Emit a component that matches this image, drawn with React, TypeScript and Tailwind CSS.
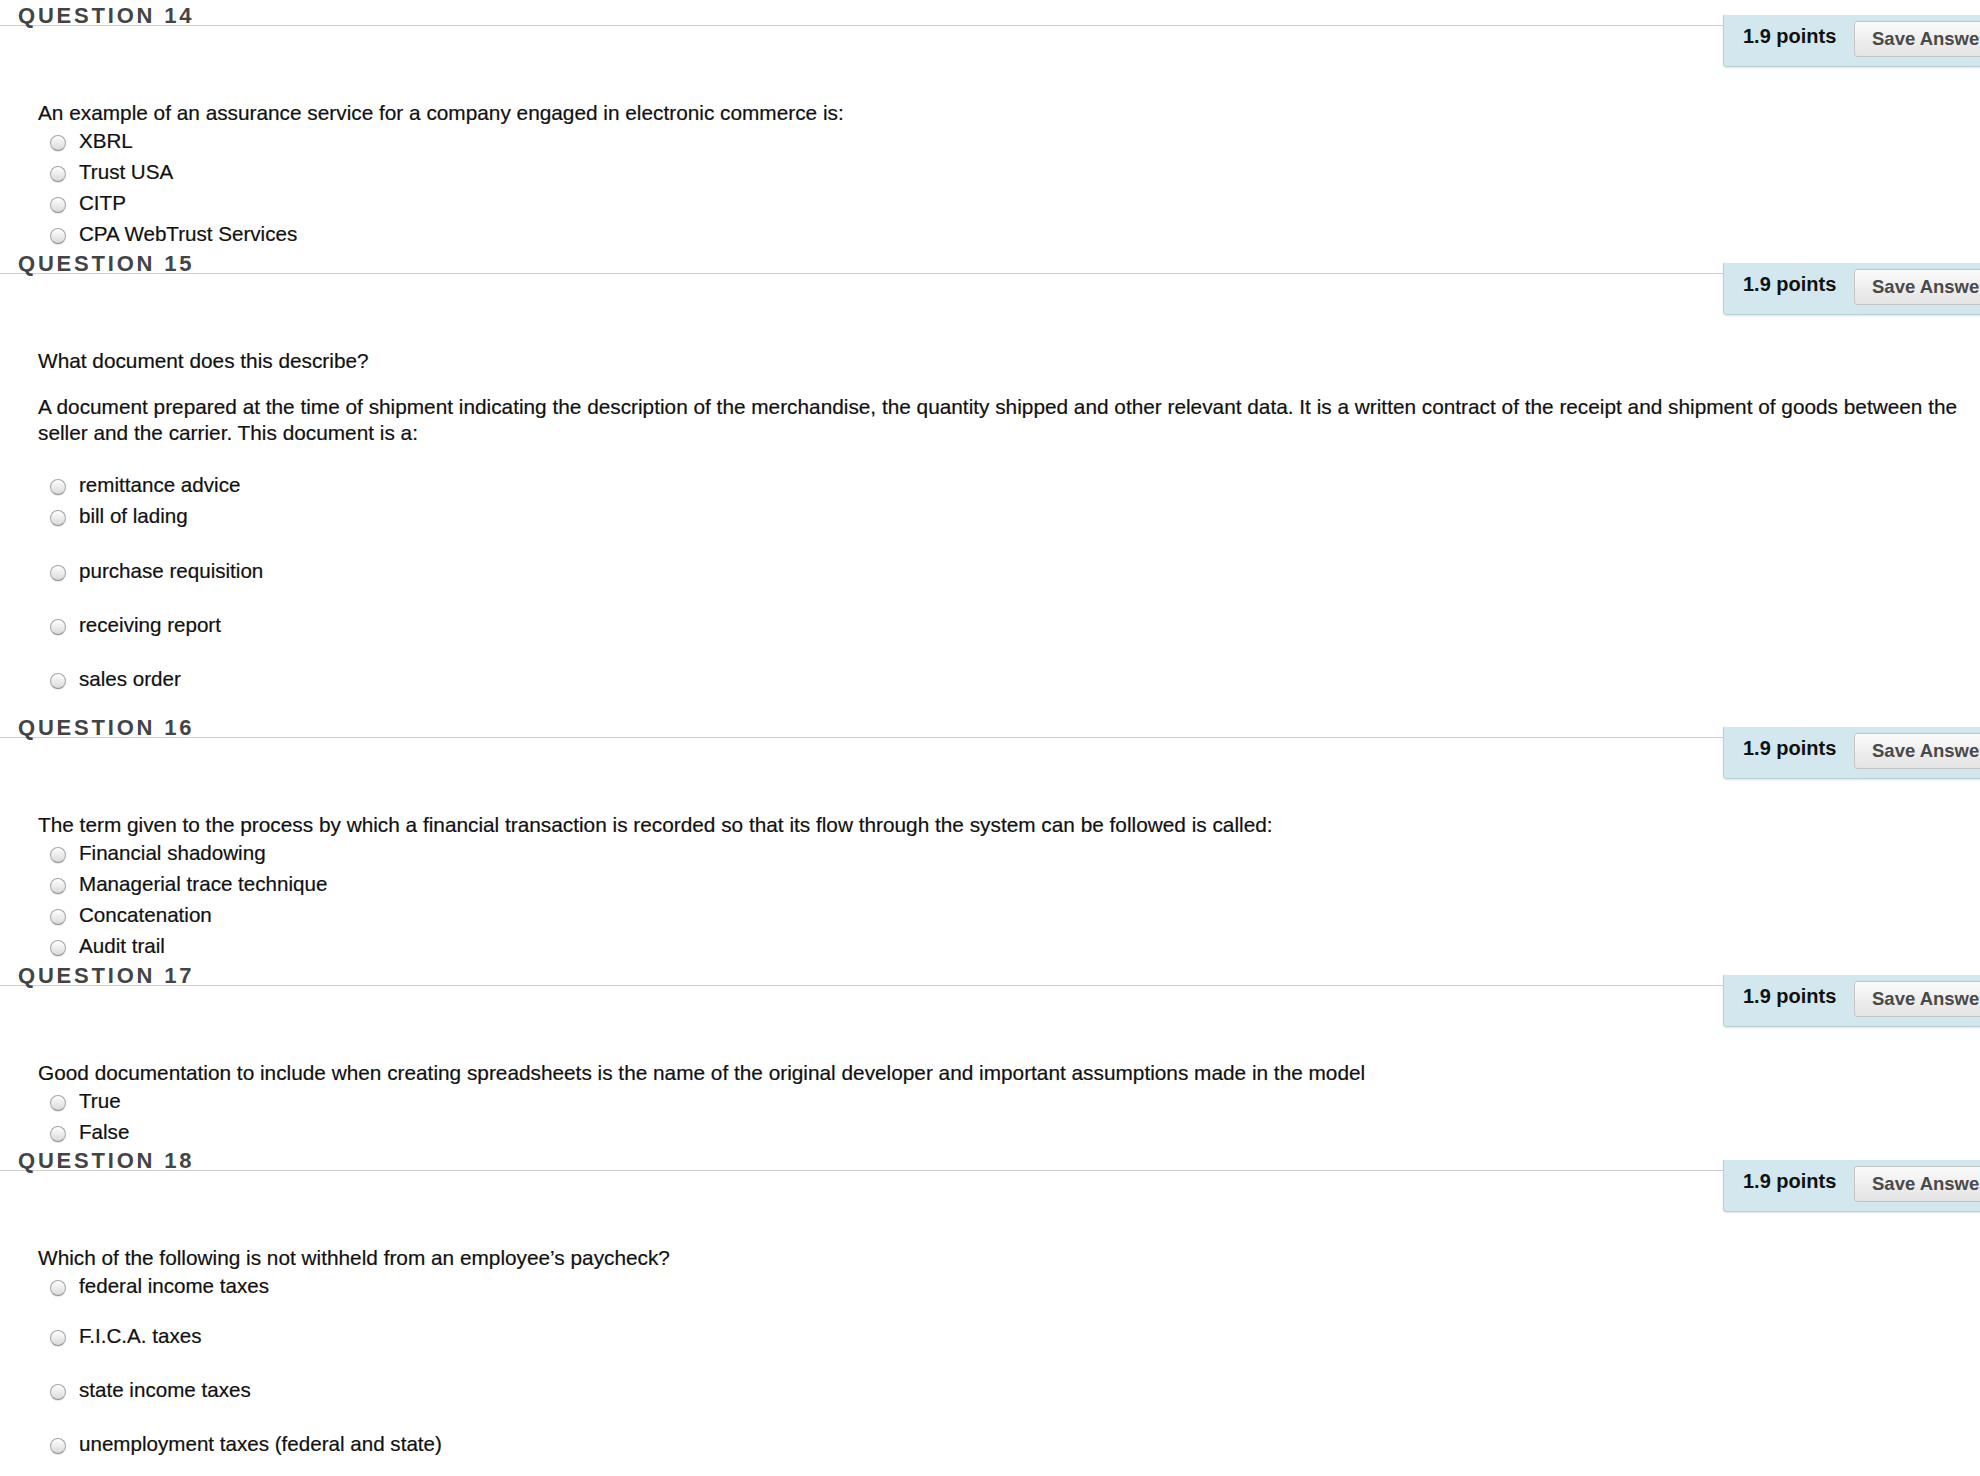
import type { ReactNode } from "react";

interface Option {
  label: string;
  gap?: string;
}

function Radio() {
  return (
    <span className="w-[16px] h-[16px] mt-[4px] shrink-0 rounded-full border border-[#a6a6a6] border-b-[#8c8c8c] bg-linear-to-b from-[#ffffff] to-[#d9d9d9] shadow-[0_1px_1px_rgba(0,0,0,0.1)]" />
  );
}

function PointsBox() {
  return (
    <div className="ml-auto -mr-[33px] w-[290px] h-[52px] flex items-start bg-[#d2e8ee] border-l border-b border-[#b8d0d8] rounded-bl-[4px] shadow-[0_1px_2px_rgba(0,0,0,0.12)]">
      <span className="w-[111px] shrink-0 ml-[19px] mt-[9px] text-[20px] leading-[24px] font-bold text-[#111111]">
        1.9 points
      </span>
      <button className="mt-[6px] h-[36px] px-[17px] whitespace-nowrap border border-[#c4c4c4] rounded-[3px] bg-linear-to-b from-[#fbfbfb] to-[#e3e3e3] text-[18.5px] leading-[22px] font-bold text-[#4a4a4a]">
        Save Answer
      </button>
    </div>
  );
}

function Question({
  number,
  children,
  options,
  bottom,
}: {
  number: number;
  children: ReactNode;
  options: Option[];
  bottom: string;
}) {
  return (
    <section className={bottom}>
      {/* titulo con la linea */}
      <div className="border-b border-[#cfcfcf]">
        <h2 className="pl-[18px] text-[22px] leading-[18px] font-bold tracking-[2.8px] text-[#444444]">
          QUESTION {number}
        </h2>
      </div>
      <div className="flex -mt-[11px]">
        <PointsBox />
      </div>

      <div className="pl-[38px] pt-[34px] text-[20.8px] text-[#111111] [-webkit-text-stroke:0.2px_#111111]">
        {children}
        <div>
          {options.map((opt) => (
            <label
              key={opt.label}
              className={`flex items-center h-[31px] pl-[12px] ${opt.gap ?? ""}`}
            >
              <Radio />
              <span className="ml-[13px] text-[20.6px] leading-[24px]">
                {opt.label}
              </span>
            </label>
          ))}
        </div>
      </div>
    </section>
  );
}

export default function App() {
  return (
    <div className="min-h-screen bg-white overflow-hidden pt-[7px] font-['Liberation_Sans',Arial,Helvetica,sans-serif]">
      <Question
        number={14}
        bottom="pb-[6px]"
        options={[
          { label: "XBRL" },
          { label: "Trust USA" },
          { label: "CITP" },
          { label: "CPA WebTrust Services" },
        ]}
      >
        <p className="leading-[24px]">
          An example of an assurance service for a company engaged in electronic
          commerce is:
        </p>
      </Question>

      <Question
        number={15}
        bottom="pb-[25px]"
        options={[
          { label: "remittance advice", gap: "mt-[23px]" },
          { label: "bill of lading" },
          { label: "purchase requisition", gap: "mt-[24px]" },
          { label: "receiving report", gap: "mt-[23px]" },
          { label: "sales order", gap: "mt-[23px]" },
        ]}
      >
        <p className="leading-[24px]">What document does this describe?</p>
        <p className="mt-[21px] leading-[26px]">
          A document prepared at the time of shipment indicating the description
          of the merchandise, the quantity shipped and other relevant data. It is
          a written contract of the receipt and shipment of goods between the
          seller and the carrier. This document is a:
        </p>
      </Question>

      <Question
        number={16}
        bottom="pb-[6px]"
        options={[
          { label: "Financial shadowing" },
          { label: "Managerial trace technique" },
          { label: "Concatenation" },
          { label: "Audit trail" },
        ]}
      >
        <p className="leading-[24px]">
          The term given to the process by which a financial transaction is
          recorded so that its flow through the system can be followed is
          called:
        </p>
      </Question>

      <Question
        number={17}
        bottom="pb-[5px]"
        options={[{ label: "True" }, { label: "False" }]}
      >
        <p className="leading-[24px]">
          Good documentation to include when creating spreadsheets is the name of
          the original developer and important assumptions made in the model
        </p>
      </Question>

      <Question
        number={18}
        bottom="pb-[10px]"
        options={[
          { label: "federal income taxes" },
          { label: "F.I.C.A. taxes", gap: "mt-[19px]" },
          { label: "state income taxes", gap: "mt-[23px]" },
          { label: "unemployment taxes (federal and state)", gap: "mt-[23px]" },
        ]}
      >
        <p className="leading-[24px]">
          Which of the following is not withheld from an employee’s paycheck?
        </p>
      </Question>
    </div>
  );
}
